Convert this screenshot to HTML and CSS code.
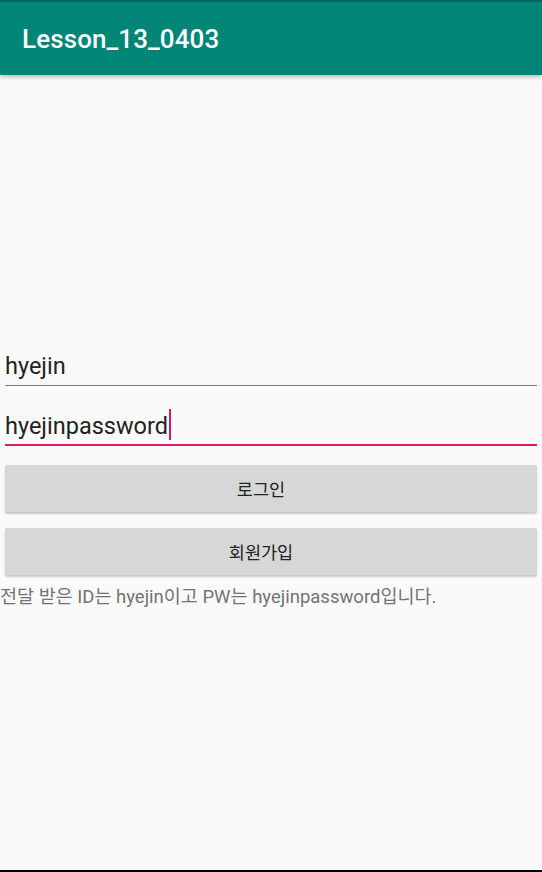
FILE: index.html
```html
<!DOCTYPE html>
<html lang="ko">
<head>
<meta charset="utf-8">
<link rel="stylesheet" href="styles.css">
</head>
<body>
<div class="status"></div>
<header class="appbar"><h1 class="title">Lesson_13_0403</h1></header>
<main class="content">
  <div class="field"><span class="value">hyejin</span></div>
  <div class="field focused"><span class="value">hyejinpassword</span><span class="cursor"></span></div>
  <button class="btn">로그인</button>
  <button class="btn">회원가입</button>
  <p class="result">전달 받은 ID는 hyejin이고 PW는 hyejinpassword입니다.</p>
</main>
<div class="navline"></div>
</body>
</html>
```
FILE: styles.css
```css
html, body { margin: 0; padding: 0; }
body {
  width: 542px;
  height: 872px;
  background: #fafafa;
  font-family: Roboto, "Noto Sans CJK KR", sans-serif;
  display: flex;
  flex-direction: column;
  overflow: hidden;
}
.status { height: 2px; background: #00695c; }
.appbar {
  height: 73px;
  background: #008577;
  display: flex;
  align-items: center;
  padding-left: 22px;
  box-shadow: 0 2px 4px rgba(0,0,0,0.25);
  position: relative;
  z-index: 1;
}
.title {
  margin: 0;
  color: #fff;
  font-size: 26px;
  font-weight: 500;
  letter-spacing: 0.1px;
}
.content {
  flex: 1;
  padding-top: 263px;
  display: flex;
  flex-direction: column;
}
.field {
  margin: 0 5px;
  height: 48px;
  display: flex;
  align-items: flex-end;
  border-bottom: 1px solid #7a7a7a;
  box-sizing: border-box;
  padding-bottom: 4px;
  margin-bottom: 11px;
}
.field.focused { border-bottom: 2px solid #d81b60; height: 49px; padding-bottom: 3px; }
.value { font-size: 23.5px; color: #222; line-height: 30px; }
.cursor { width: 2px; height: 31px; background: #d81b60; margin-left: 1px; margin-bottom: 1px; }
.btn {
  margin: 0 5px;
  height: 47px;
  border: none;
  border-radius: 2px;
  background: #d6d7d7;
  box-shadow: 0 2px 2px rgba(0,0,0,0.2);
  font-family: Roboto, "Noto Sans CJK KR", sans-serif;
  font-size: 17.5px;
  color: #222;
  padding: 0 20px 0 0;
  margin-bottom: 16px;
}
.field.focused + .btn { margin-top: 8px; }
.result {
  margin: -6px 0 0 0;
  font-size: 18.5px;
  color: #737373;
  line-height: 24px;
}
.navline { height: 2px; background: #000; margin-top: auto; }
```
